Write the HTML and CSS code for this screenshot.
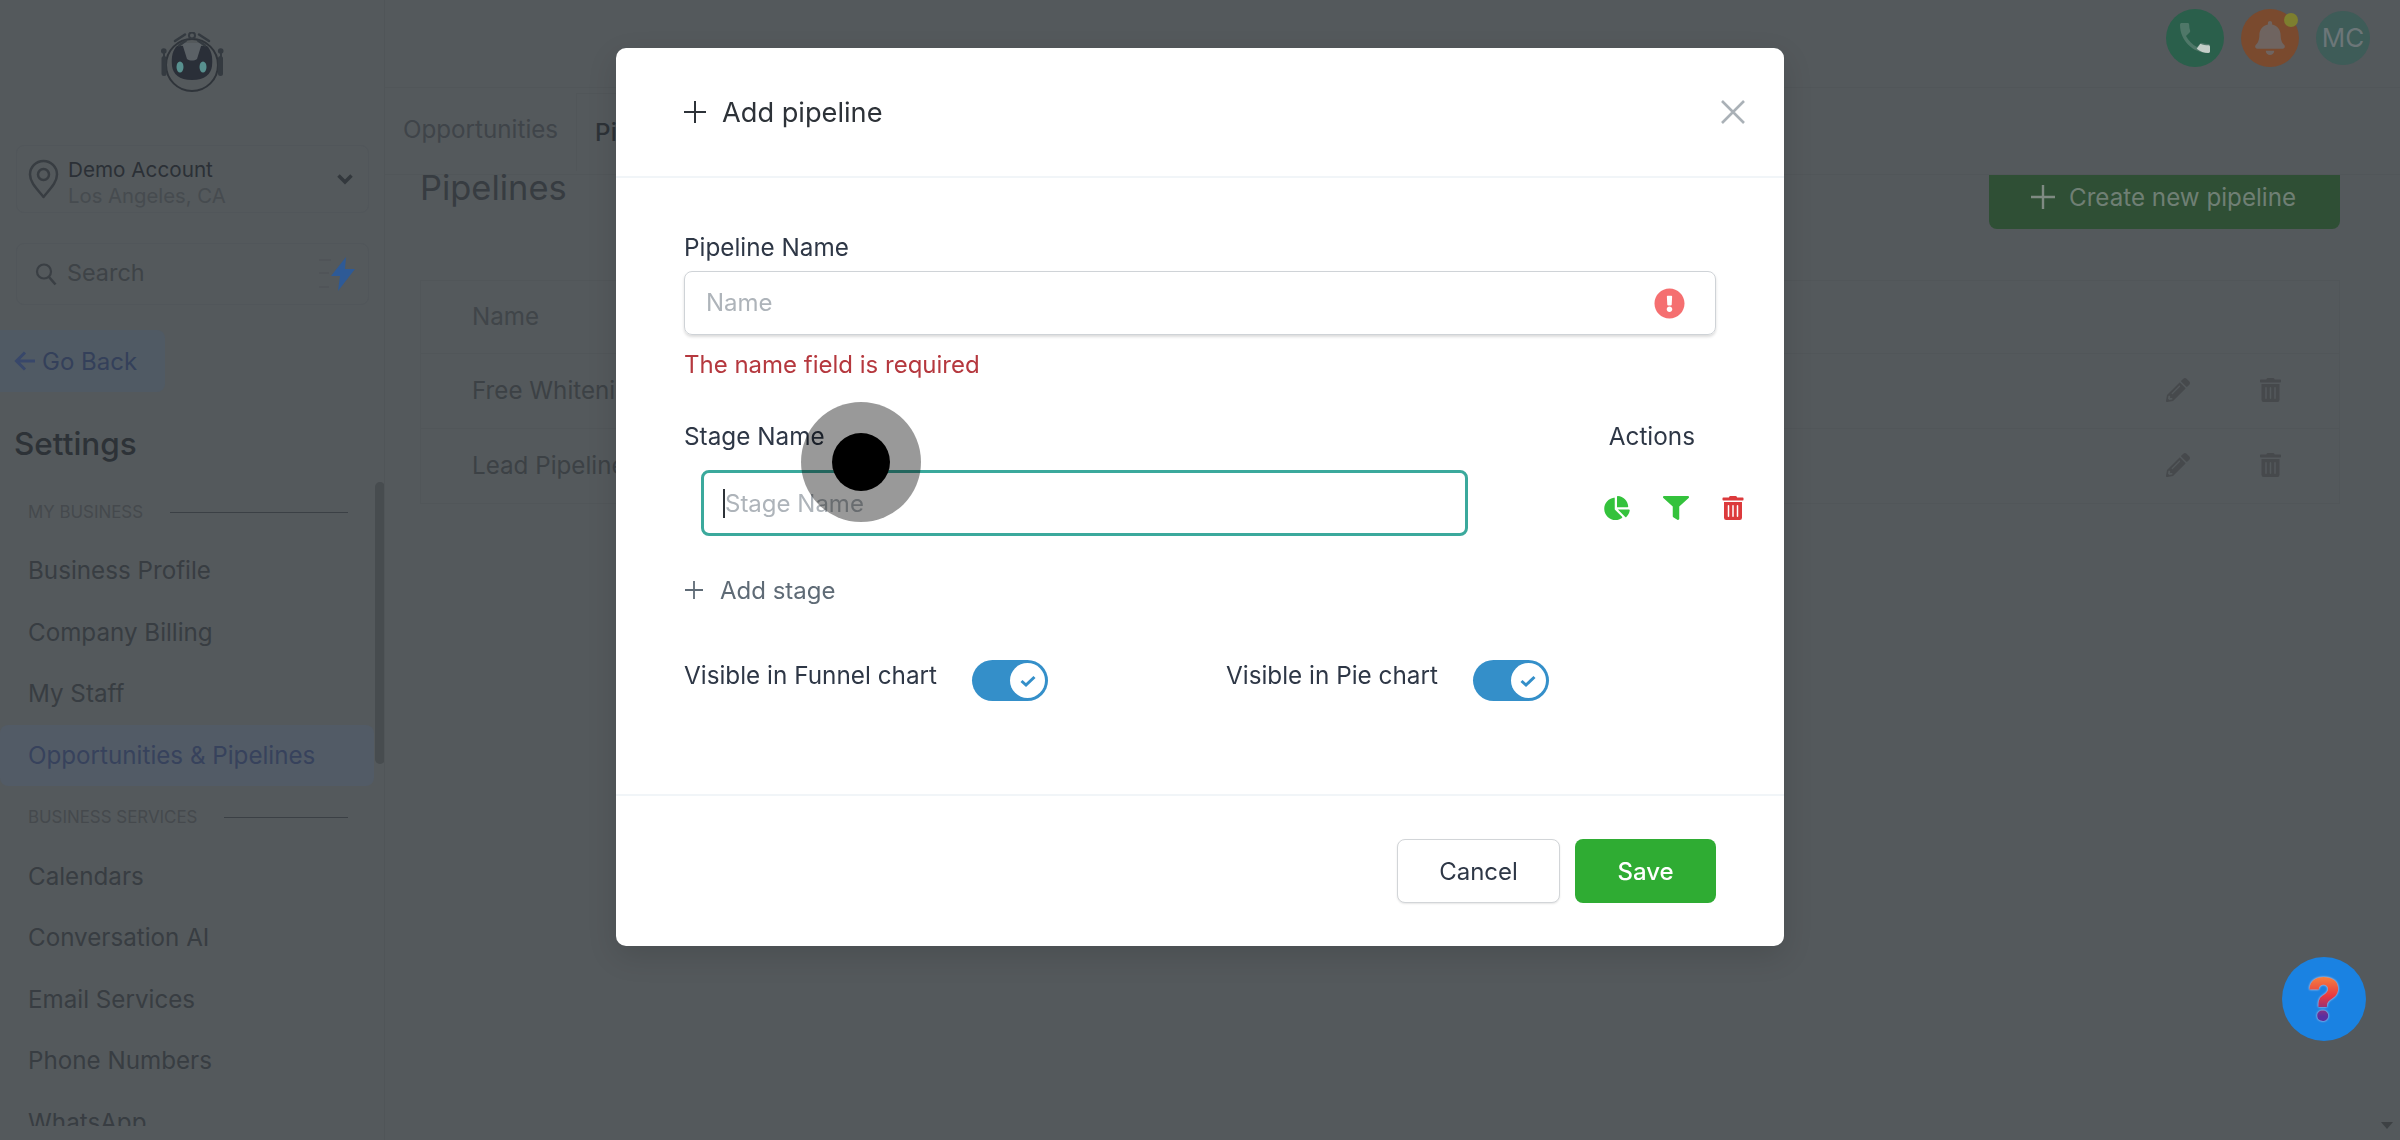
FILE: index.html
```html
<!DOCTYPE html>
<html lang="en">
<head>
<meta charset="utf-8">
<title>Add pipeline</title>
<link rel="stylesheet" href="styles.css">
</head>
<body>
<div class="page">
  <aside class="sidebar">
    <div class="logo">
      <svg width="64" height="60" viewBox="0 0 64 60" fill="none">
        <circle cx="31" cy="33" r="26" stroke="#2f343a" stroke-width="2"/>
        <path d="M16 14H46C50 18 52 24 51 34C50 42 44 48 31 48C18 48 12 42 11 34C10 24 12 18 16 14Z" fill="#2a2f38"/>
        <path d="M21 11H41L36 27C33 29 29 29 26 27Z" fill="#5b6166"/>
        <ellipse cx="19" cy="35" rx="3.5" ry="5.5" fill="#58908f"/>
        <ellipse cx="42" cy="35" rx="3.5" ry="5.5" fill="#58908f"/>
        <circle cx="31" cy="3.500" r="3" stroke="#343a40" stroke-width="2"/>
        <path d="M14 9L24 2.500M18 13.500L25 8.500M48 9L38 2.500M44 13.500L37 8.500" stroke="#343a40" stroke-width="2.500" stroke-linecap="round"/>
        <circle cx="2.800" cy="19" r="2.800" fill="#343a40"/>
        <circle cx="59.700" cy="19" r="2.800" fill="#343a40"/>
        <path d="M3 21V27M60 21V27" stroke="#343a40" stroke-width="2"/>
        <rect x="0.500" y="24" width="5" height="20" rx="2.500" fill="#343a40"/>
        <rect x="57" y="24" width="5" height="20" rx="2.500" fill="#343a40"/>
      </svg>
    </div>
    <div class="card account">
      <svg class="pin" width="31" height="40" viewBox="0 0 31 40" fill="none">
        <path d="M15.500 38C10 31 2 24 2 15.500A13.500 13.500 0 0 1 29 15.500C29 24 21 31 15.500 38Z" stroke="#383d42" stroke-width="2.500" stroke-linejoin="round"/>
        <circle cx="15.500" cy="15.500" r="5.500" stroke="#383d42" stroke-width="2.500"/>
      </svg>
      <div class="account-text">
        <div class="account-name">Demo Account</div>
        <div class="account-place">Los Angeles, CA</div>
      </div>
      <svg class="chevron" width="18" height="12" viewBox="0 0 18 12" fill="none"><path d="M2.500 2.500L9 9L15.500 2.500" stroke="#33383d" stroke-width="3.500"/></svg>
    </div>
    <div class="card search">
      <svg width="22" height="24" viewBox="0 0 22 24" fill="none"><circle cx="9" cy="9.500" r="7" stroke="#3a3f44" stroke-width="2.200"/><path d="M14 15L20.500 22.500" stroke="#3a3f44" stroke-width="2.600"/></svg>
      <span class="search-label">Search</span>
      <svg class="bolt" width="36" height="34" viewBox="0 0 36 34"><path d="M0 3H12M0 16H10M0 30H10" stroke="#4c5155" stroke-width="1"/><path d="M27 0L12 19H21L19 34L36 12H26Z" fill="#2e5a96"/></svg>
    </div>
    <div class="back">
      <svg class="back-arrow" width="22" height="22" viewBox="0 0 22 22" fill="none"><path d="M11 2.500L2.500 11L11 19.500M3 11H21" stroke="#38476a" stroke-width="3"/></svg>
      <span>Go Back</span>
    </div>
    <h2 class="settings">Settings</h2>
    <nav class="nav">
      <div class="section"><span>MY BUSINESS</span><i></i></div>
      <a class="item">Business Profile</a>
      <a class="item">Company Billing</a>
      <a class="item">My Staff</a>
      <a class="item active">Opportunities &amp; Pipelines</a>
      <div class="section second"><span>BUSINESS SERVICES</span><i></i></div>
      <a class="item">Calendars</a>
      <a class="item">Conversation AI</a>
      <a class="item">Email Services</a>
      <a class="item">Phone Numbers</a>
      <a class="item">WhatsApp</a>
      <div class="thumb"></div>
    </nav>
  </aside>
  <main class="main">
    <header class="topbar">
      <div class="avatar phone">
        <svg width="40" height="40" viewBox="0 0 24 24"><path fill="#4f7768" d="M6.600 10.800c1.400 2.800 3.800 5.100 6.600 6.600l2.200-2.200c.3-.3.700-.4 1-.2 1.100.4 2.300.6 3.600.6.600 0 1 .4 1 1V20c0 .6-.4 1-1 1C10.600 21 3 13.400 3 4c0-.6.400-1 1-1h3.500c.6 0 1 .4 1 1 0 1.300.2 2.500.6 3.600.1.300 0 .7-.2 1z"/><path fill="#c4cec8" d="M15.200 15.400c1.500.6 3.300.9 4.800.9.600 0 1 .4 1 1V20c0 .6-.4 1-1 1-2.500 0-5-.8-7-2.500z"/></svg>
      </div>
      <div class="avatar bell">
        <svg width="30" height="34" viewBox="0 0 448 512"><path fill="#6f6460" d="M224 512c35.320 0 63.970-28.650 63.970-64H160.030c0 35.350 28.650 64 63.970 64zm215.390-149.710c-19.320-20.760-55.470-51.990-55.470-154.290 0-77.700-54.480-139.900-127.940-155.160V32c0-17.670-14.320-32-31.980-32s-31.980 14.330-31.980 32v20.840C118.560 68.100 64.080 130.300 64.080 208c0 102.300-36.150 133.530-55.470 154.290-6 6.450-8.660 14.160-8.610 21.710.11 16.400 12.980 32 32.100 32h383.800c19.120 0 32-15.600 32.100-32 .05-7.550-2.610-15.270-8.610-21.710z"/></svg>
        <span class="dot"></span>
      </div>
      <div class="avatar initials">MC</div>
    </header>
    <div class="tabs">
      <span class="tab">Opportunities</span>
      <span class="tab current">Pipelines</span>
    </div>
    <div class="title-row">
      <h1 class="title">Pipelines</h1>
      <button class="create">
        <svg width="24" height="24" viewBox="0 0 24 24"><path d="M12 0V24M0 12H24" stroke="#7f8a82" stroke-width="2.400"/></svg>
        <span>Create new pipeline</span>
      </button>
    </div>
    <section class="table">
      <div class="row head">Name</div>
      <div class="row">
        <span class="row-name">Free Whitening</span>
        <svg class="row-icon" width="24" height="24" viewBox="0 0 512 512"><path fill="#46494c" d="M497.900 142.100l-46.100 46.100c-4.700 4.700-12.300 4.700-17 0l-111-111c-4.700-4.700-4.700-12.300 0-17l46.100-46.100c18.700-18.700 49.100-18.700 67.900 0l60.100 60.100c18.800 18.700 18.800 49.100 0 67.900zM284.200 99.800L21.600 362.400.4 483.900c-2.900 16.400 11.400 30.600 27.800 27.800l121.500-21.300 262.600-262.600c4.700-4.700 4.700-12.300 0-17l-111-111c-4.800-4.700-12.400-4.700-17.100 0zM124.100 339.900c-5.500-5.500-5.500-14.300 0-19.800l154-154c5.500-5.500 14.300-5.500 19.800 0s5.500 14.300 0 19.800l-154 154c-5.500 5.500-14.300 5.500-19.800 0zM88 424h48v36.300l-64.500 11.300-31.100-31.100L51.700 376H88v48z"/></svg>
        <svg class="row-icon" width="23" height="24" viewBox="0 0 448 512"><path fill="#46494c" d="M32 464a48 48 0 0 0 48 48h288a48 48 0 0 0 48-48V128H32zm272-256a16 16 0 0 1 32 0v224a16 16 0 0 1-32 0zm-96 0a16 16 0 0 1 32 0v224a16 16 0 0 1-32 0zm-96 0a16 16 0 0 1 32 0v224a16 16 0 0 1-32 0zM432 32H312l-9.400-18.700A24 24 0 0 0 281.100 0H166.800a23.720 23.720 0 0 0-21.400 13.300L136 32H16A16 16 0 0 0 0 48v32a16 16 0 0 0 16 16h416a16 16 0 0 0 16-16V48a16 16 0 0 0-16-16z"/></svg>
      </div>
      <div class="row">
        <span class="row-name">Lead Pipeline</span>
        <svg class="row-icon" width="24" height="24" viewBox="0 0 512 512"><path fill="#46494c" d="M497.900 142.100l-46.100 46.100c-4.700 4.700-12.300 4.700-17 0l-111-111c-4.700-4.700-4.700-12.300 0-17l46.100-46.100c18.700-18.700 49.100-18.700 67.900 0l60.100 60.100c18.800 18.700 18.800 49.100 0 67.900zM284.200 99.800L21.600 362.400.4 483.900c-2.900 16.400 11.400 30.600 27.800 27.800l121.500-21.300 262.600-262.600c4.700-4.700 4.700-12.300 0-17l-111-111c-4.800-4.700-12.400-4.700-17.100 0zM124.100 339.900c-5.500-5.500-5.500-14.300 0-19.800l154-154c5.500-5.500 14.300-5.500 19.800 0s5.500 14.300 0 19.800l-154 154c-5.500 5.500-14.300 5.500-19.800 0zM88 424h48v36.300l-64.500 11.300-31.100-31.100L51.700 376H88v48z"/></svg>
        <svg class="row-icon" width="23" height="24" viewBox="0 0 448 512"><path fill="#46494c" d="M32 464a48 48 0 0 0 48 48h288a48 48 0 0 0 48-48V128H32zm272-256a16 16 0 0 1 32 0v224a16 16 0 0 1-32 0zm-96 0a16 16 0 0 1 32 0v224a16 16 0 0 1-32 0zm-96 0a16 16 0 0 1 32 0v224a16 16 0 0 1-32 0zM432 32H312l-9.400-18.700A24 24 0 0 0 281.100 0H166.800a23.720 23.720 0 0 0-21.400 13.300L136 32H16A16 16 0 0 0 0 48v32a16 16 0 0 0 16 16h416a16 16 0 0 0 16-16V48a16 16 0 0 0-16-16z"/></svg>
      </div>
    </section>
  </main>
</div>

<div class="overlay">
  <div class="modal">
    <div class="modal-head">
      <svg width="22" height="22" viewBox="0 0 22 22"><path d="M11 0V22M0 11H22" stroke="#2d3238" stroke-width="2"/></svg>
      <span class="modal-title">Add pipeline</span>
      <svg class="close" width="24" height="24" viewBox="0 0 24 24"><path d="M1 1L23 23M23 1L1 23" stroke="#aab1b7" stroke-width="2.600"/></svg>
    </div>
    <div class="modal-body">
      <label class="label">Pipeline Name</label>
      <div class="field">
        <span class="placeholder">Name</span>
        <svg width="31" height="31" viewBox="0 0 512 512"><path fill="#f56f70" d="M504 256c0 136.997-111.043 248-248 248S8 392.997 8 256C8 119.083 119.043 8 256 8s248 111.083 248 248zm-248 50c-25.405 0-46 20.595-46 46s20.595 46 46 46 46-20.595 46-46-20.595-46-46-46zm-43.673-165.346l7.418 136c.347 6.364 5.609 11.346 11.982 11.346h48.546c6.373 0 11.635-4.982 11.982-11.346l7.418-136c.375-6.874-5.098-12.654-11.982-12.654h-63.383c-6.884 0-12.356 5.780-11.981 12.654z"/></svg>
      </div>
      <div class="error">The name field is required</div>
      <div class="stage-head"><span class="label">Stage Name</span><span class="label">Actions</span></div>
      <div class="stage-row">
        <div class="stage-input"><span class="caret"></span><span class="placeholder">Stage Name</span></div>
        <div class="stage-actions">
          <svg width="26" height="24" viewBox="0 0 544 512"><path fill="#34c23c" d="M527.790 288H290.500l158.030 158.030c6.040 6.040 15.980 6.530 22.190.68 38.700-36.460 65.320-85.610 73.130-140.860 1.340-9.460-6.510-17.850-15.950-17.850zm-15.830-64.800C503.720 103.740 408.260 8.280 288.800.04 279.680-.59 272 7.100 272 16.240V240h223.770c9.140 0 16.820-7.680 16.190-16.800zM224 288V50.710c0-9.440-8.390-17.290-17.850-15.950C86.990 51.490-4.100 155.600.14 280.370 4.500 408.510 114.830 513.590 243.030 511.980c50.400-.63 96.970-16.870 135.260-44.030 7.900-5.600 8.420-17.230 1.570-24.080L224 288z"/></svg>
          <svg width="26" height="24" viewBox="0 0 512 512" preserveAspectRatio="none"><path fill="#34c23c" d="M487.976 0H24.028C2.710 0-8.047 25.866 7.058 40.971L192 225.941V432c0 7.831 3.821 15.170 10.237 19.662l80 55.980C298.020 518.690 320 507.493 320 487.980V225.941l184.947-184.970C520.021 25.896 509.338 0 487.976 0z"/></svg>
          <svg width="22" height="24" viewBox="0 0 448 512"><path fill="#dc3a3c" d="M32 464a48 48 0 0 0 48 48h288a48 48 0 0 0 48-48V128H32zm272-256a16 16 0 0 1 32 0v224a16 16 0 0 1-32 0zm-96 0a16 16 0 0 1 32 0v224a16 16 0 0 1-32 0zm-96 0a16 16 0 0 1 32 0v224a16 16 0 0 1-32 0zM432 32H312l-9.400-18.700A24 24 0 0 0 281.100 0H166.800a23.720 23.720 0 0 0-21.400 13.300L136 32H16A16 16 0 0 0 0 48v32a16 16 0 0 0 16 16h416a16 16 0 0 0 16-16V48a16 16 0 0 0-16-16z"/></svg>
        </div>
      </div>
      <div class="add-stage">
        <svg width="18" height="18" viewBox="0 0 18 18"><path d="M9 0V18M0 9H18" stroke="#5f6b76" stroke-width="1.800"/></svg>
        <span>Add stage</span>
      </div>
      <div class="toggles">
        <div class="toggle-group">
          <span class="label">Visible in Funnel chart</span>
          <span class="switch"><span class="knob"><svg width="18" height="14" viewBox="0 0 18 14" fill="none"><path d="M2.500 7L7 11L15.500 3" stroke="#348fc9" stroke-width="3"/></svg></span></span>
        </div>
        <div class="toggle-group">
          <span class="label">Visible in Pie chart</span>
          <span class="switch"><span class="knob"><svg width="18" height="14" viewBox="0 0 18 14" fill="none"><path d="M2.500 7L7 11L15.500 3" stroke="#348fc9" stroke-width="3"/></svg></span></span>
        </div>
      </div>
    </div>
    <div class="modal-foot">
      <button class="btn cancel">Cancel</button>
      <button class="btn save">Save</button>
    </div>
  </div>
  <div class="pointer"><span class="pointer-dot"></span></div>
  <div class="help"><span class="help-mark">?</span></div>
  <div class="scroll-arrow"></div>
</div>
</body>
</html>
```
FILE: styles.css
```css
* { box-sizing: border-box; }
html, body { margin: 0; height: 100%; }
body {
  width: 2400px;
  height: 1140px;
  overflow: hidden;
  background: #54595c;
  font-family: Inter, "Liberation Sans", sans-serif;
  color: #30353b;
}
.page { display: flex; height: 1140px; }

/* sidebar */
.sidebar { width: 385px; flex: none; padding-top: 32px; border-right: 1px solid #505558; display: flex; flex-direction: column; }
.logo { height: 60px; display: flex; padding-left: 161px; }
.card { margin: 0 15px 0 16px; border: 1px solid #51565a; border-radius: 8px; display: flex; align-items: center; }
.account { height: 68px; margin-top: 53px; padding: 0 14px 0 11px; }
.account-text { margin-left: 9px; padding-top: 8px; flex: 1; }
.account-name { font-size: 20.7px; line-height: 26px; color: #2b3036; }
.account-place { font-size: 20.3px; line-height: 26px; color: #464b4f; }
.search { height: 62px; margin-top: 30px; padding: 0 13px 0 18px; }
.search-label { margin: 0 0 3px 10px; flex: 1; font-size: 23.4px; color: #3e4347; }
.back { width: 165px; height: 62px; margin-top: 25px; background: #505a64; border-radius: 0 8px 8px 0; display: flex; align-items: center; padding-left: 14px; font-size: 24px; color: #34405a; }
.back-arrow { margin-right: 6px; }
.settings { margin: 32px 0 0 14px; font-size: 31.5px; line-height: 40px; font-weight: 500; color: #2d3237; }
.nav { position: relative; height: 662px; overflow: hidden; padding: 20px 10px 0 0; }
.section { height: 56px; padding: 0 26px 0 28px; display: flex; align-items: center; gap: 27px; font-size: 16.9px; color: #45494d; }
.section i { flex: 1; height: 1px; background: #3b4045; }
.section.second { margin-top: 3px; }
.item { display: flex; align-items: center; height: 61.6px; padding-left: 28px; font-size: 24.2px; color: #383d42; }
.item.active { color: #37425c; background: #525b66; border-radius: 8px; }
.thumb { position: absolute; right: -1px; top: 18px; width: 10px; height: 282px; border-radius: 5px; background: #474c4f; }

/* main */
.main { flex: 1; min-width: 0; }
.topbar { height: 88px; display: flex; justify-content: flex-end; align-items: center; padding-right: 30px; gap: 17px; padding-bottom: 12px; border-bottom: 1px solid #515659; }
.avatar { position: relative; width: 58px; height: 58px; border-radius: 50%; display: flex; align-items: center; justify-content: center; }
.phone { background: #2a5f4b; }
.bell { background: #7a4a2e; }
.dot { position: absolute; right: 1px; top: 4px; width: 14px; height: 14px; border-radius: 50%; background: #7d7f2f; }
.initials { width: 54px; height: 54px; background: #3e5c58; color: #6c7678; font-size: 26px; }
.tabs { height: 87px; display: flex; padding-left: 18px; padding-bottom: 3px; border-bottom: 1px solid #515659; }
.tab { display: flex; align-items: center; font-size: 24.2px; color: #3f4449; padding-right: 18px; }
.tab.current { margin: 5px 0 0; padding: 0 18px; color: #2d3237; border: 1px solid #515659; border-bottom: none; font-weight: 500; }
.title-row { display: flex; justify-content: space-between; align-items: flex-start; padding: 0 60px 0 35px; }
.title { margin: 0; font-size: 34.4px; line-height: 26px; font-weight: 400; color: #373c41; }
.create { height: 54px; width: 351px; border: none; border-radius: 0 0 8px 8px; background: #2f4f35; color: #6f7f74; font: 400 24.2px Inter, sans-serif; display: flex; align-items: center; gap: 14px; padding: 0 0 10px 42px; }
.table { margin: 51px 60px 0 35px; border: 1px solid #515659; }
.row { height: 75px; display: flex; align-items: center; gap: 69px; padding: 0 57px 2px 51px; border-top: 1px solid #515659; font-size: 24.2px; color: #3c4145; }
.row.head { height: 72px; border-top: none; color: #404549; }
.row-name { flex: 1; }

/* modal */
.overlay { position: fixed; inset: 0; display: flex; justify-content: center; align-items: flex-start; padding-top: 48px; }
.modal { width: 1168px; background: #fff; border-radius: 10px; box-shadow: 0 10px 30px rgba(0,0,0,.12); }
.modal-head { height: 130px; display: flex; align-items: center; padding: 0 39px 0 68px; gap: 16px; border-bottom: 2px solid #f1f5f8; }
.modal-title { flex: 1; font-size: 27.2px; color: #2d3238; }
.modal-body { height: 616px; padding: 54px 68px 0; }
.label { font-size: 24.3px; line-height: 30px; font-weight: 400; color: #2e3746; white-space: nowrap; }
.modal-body > .label { display: block; }
.field { margin-top: 9px; height: 64px; border: 1px solid #cfd3d7; border-radius: 8px; box-shadow: 0 2px 3px rgba(0,0,0,.14); display: flex; align-items: center; justify-content: space-between; padding: 0 30px 2px 21px; }
.field svg { margin-top: 2px; }
.placeholder { font-size: 24px; color: #aeb4ba; }
.error { margin-top: 15px; font-size: 24px; line-height: 30px; color: #b5383e; }
.stage-head { margin-top: 41px; display: flex; justify-content: space-between; padding-right: 21px; }
.stage-row { margin: 19px -28px 0 17px; display: flex; align-items: center; gap: 136px; }
.stage-input { width: 767px; height: 66px; border: 3px solid #3ba99c; border-radius: 8px; display: flex; align-items: center; padding-left: 19px; }
.caret { width: 2px; height: 29px; background: #2d3238; }
.stage-actions { display: flex; gap: 33px; align-items: center; margin-top: 10px; }
.add-stage { margin-top: 39px; height: 30px; display: flex; align-items: center; gap: 17px; padding-left: 1px; font-size: 24px; color: #5f6b76; }
.toggles { margin-top: 55px; display: flex; }
.toggle-group { width: 542px; flex: none; display: flex; gap: 35px; align-items: flex-start; }
.switch { flex: none; width: 76px; height: 41px; background: #348fc9; border-radius: 21px; display: flex; align-items: center; justify-content: flex-end; padding-right: 3px; }
.knob { width: 35px; height: 35px; background: #fff; border-radius: 50%; display: flex; align-items: center; justify-content: center; }
.modal-foot { height: 152px; border-top: 2px solid #f1f5f8; padding: 43px 68px 0; display: flex; justify-content: flex-end; gap: 15px; align-items: flex-start; }
.btn { height: 64px; border-radius: 8px; font: 400 24px Inter, sans-serif; }
.cancel { width: 163px; background: #fff; border: 1px solid #d2d5d8; color: #2e3746; box-shadow: 0 1px 2px rgba(0,0,0,.1); }
.save { width: 141px; background: #2fac33; border: none; color: #fff; font-weight: 500; }

/* floating items */
.pointer { position: absolute; left: 801px; top: 402px; width: 120px; height: 120px; border-radius: 50%; background: rgba(0,0,0,.4); display: flex; align-items: center; justify-content: center; }
.pointer-dot { width: 58px; height: 58px; border-radius: 50%; background: #000; }
.help { position: absolute; left: 2282px; top: 957px; width: 84px; height: 84px; border-radius: 50%; background: #1a82e2; display: flex; align-items: center; justify-content: center; }
.help-mark { font-size: 58px; font-weight: 800; line-height: 1; background: linear-gradient(#f99a3f, #e8383f 45%, #5a2ea0 80%); -webkit-background-clip: text; background-clip: text; color: transparent; filter: drop-shadow(0 0 1px #e8dcea); }
.scroll-arrow { position: absolute; left: 2381px; top: 1122px; border: 6px solid transparent; border-top: 7px solid #3d4144; border-bottom: none; }
```
